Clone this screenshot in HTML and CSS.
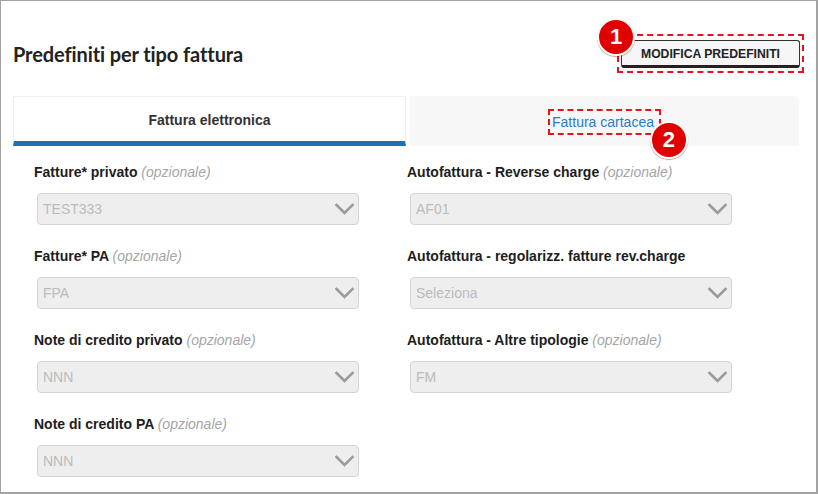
FILE: index.html
```html
<!DOCTYPE html>
<html lang="it">
<head>
<meta charset="utf-8">
<title>Predefiniti per tipo fattura</title>
<link rel="stylesheet" href="styles.css">
</head>
<body>
<div class="frame">
  <header class="head">
    <h1 class="title">Predefiniti per tipo fattura</h1>
    <div class="mark mark-btn">
      <button class="btn">MODIFICA PREDEFINITI</button>
      <span class="badge badge-1">1</span>
    </div>
  </header>

  <nav class="tabs">
    <div class="tab tab-active">Fattura elettronica</div>
    <div class="tab tab-other">
      <span class="mark mark-link">
        <a class="link">Fattura cartacea</a>
        <span class="badge badge-2">2</span>
      </span>
    </div>
  </nav>

  <section class="grid">
    <div class="field">
      <div class="label">Fatture* privato <em>(opzionale)</em></div>
      <div class="select"><span>TEST333</span><svg class="chev" viewBox="0 0 20 12"><path d="M2 2 L10 10 L18 2"/></svg></div>
    </div>
    <div class="field">
      <div class="label">Autofattura - Reverse charge <em>(opzionale)</em></div>
      <div class="select"><span>AF01</span><svg class="chev" viewBox="0 0 20 12"><path d="M2 2 L10 10 L18 2"/></svg></div>
    </div>
    <div class="field">
      <div class="label">Fatture* PA <em>(opzionale)</em></div>
      <div class="select"><span>FPA</span><svg class="chev" viewBox="0 0 20 12"><path d="M2 2 L10 10 L18 2"/></svg></div>
    </div>
    <div class="field">
      <div class="label">Autofattura - regolarizz. fatture rev.charge</div>
      <div class="select"><span>Seleziona</span><svg class="chev" viewBox="0 0 20 12"><path d="M2 2 L10 10 L18 2"/></svg></div>
    </div>
    <div class="field">
      <div class="label">Note di credito privato <em>(opzionale)</em></div>
      <div class="select"><span>NNN</span><svg class="chev" viewBox="0 0 20 12"><path d="M2 2 L10 10 L18 2"/></svg></div>
    </div>
    <div class="field">
      <div class="label">Autofattura - Altre tipologie <em>(opzionale)</em></div>
      <div class="select"><span>FM</span><svg class="chev" viewBox="0 0 20 12"><path d="M2 2 L10 10 L18 2"/></svg></div>
    </div>
    <div class="field">
      <div class="label">Note di credito PA <em>(opzionale)</em></div>
      <div class="select"><span>NNN</span><svg class="chev" viewBox="0 0 20 12"><path d="M2 2 L10 10 L18 2"/></svg></div>
    </div>
  </section>
</div>
</body>
</html>
```

FILE: styles.css
```css
* { box-sizing: border-box; }
html, body { margin: 0; padding: 0; }
body {
  width: 818px;
  height: 494px;
  overflow: hidden;
  background: #fff;
  font-family: "Liberation Sans", Arial, sans-serif;
  color: #222;
}
.frame {
  width: 818px;
  height: 494px;
  border: 1px solid #a3a3a3;
  border-right-width: 2px;
  border-bottom-width: 2px;
  padding: 33px 0 0 12px;
}
.head {
  display: flex;
  align-items: center;
  justify-content: space-between;
  width: 791px;
  height: 39px;
}
.title {
  margin: 0;
  font-family: Lato, "Liberation Sans", sans-serif;
  font-weight: 700;
  font-size: 20px;
  color: #222;
  letter-spacing: -0.1px;
}
.mark {
  position: relative;
  border: 2px dashed #e0161b;
}
.mark-btn {
  padding: 4px 2px 3px 2px;
  display: flex;
}
.btn {
  width: 179px;
  height: 28px;
  background: #f6f6f6;
  border: 1px solid #333;
  border-bottom: 3px solid #222;
  border-radius: 3px;
  font-family: "Liberation Sans", Arial, sans-serif;
  font-weight: 700;
  font-size: 12.2px;
  color: #222;
  padding: 1px 0 0 0;
}
.badge {
  position: absolute;
  width: 38px;
  height: 38px;
  border-radius: 50%;
  background: #e00000;
  border: 2px solid #fff;
  color: #fff;
  font-weight: 700;
  font-size: 22px;
  display: flex;
  align-items: center;
  justify-content: center;
  box-shadow: 0 1px 1px rgba(120,0,0,0.4);
}
.badge-1 { left: -22px; top: -18px; }
.badge-2 { right: -29px; top: 10px; }

.tabs {
  display: flex;
  gap: 4px;
  margin-top: 23px;
  width: 786px;
  height: 50px;
}
.tab {
  height: 50px;
  display: flex;
  align-items: center;
  justify-content: center;
  font-size: 14px;
}
.tab-active {
  width: 393px;
  background: #fff;
  border: 1px solid #f0f0f0;
  border-bottom: 5px solid #1a73ba;
  font-weight: 700;
  color: #333;
  padding-top: 1px;
}
.tab-other {
  width: 389px;
  background: #f7f7f7;
  border-top-right-radius: 5px;
  padding-top: 1px;
}
.mark-link {
  display: inline-block;
  padding: 3px 5px 3px 2px;
}
.link {
  color: #2a7cc4;
  font-size: 14px;
  line-height: 16px;
  display: block;
}

.grid {
  display: grid;
  grid-template-columns: 373px 373px;
  row-gap: 23px;
  margin-top: 18px;
  padding-left: 21px;
}
.field {
  display: flex;
  flex-direction: column;
}
.label {
  font-weight: 700;
  font-size: 14px;
  line-height: 16px;
  height: 16px;
  color: #1d1d1d;
}
.label em {
  font-weight: 400;
  font-style: italic;
  color: #a5a5a5;
}
.select {
  margin: 13px 0 0 3px;
  width: 322px;
  height: 32px;
  background: #eeeeee;
  border: 1px solid #d4d4d4;
  border-radius: 4px;
  display: flex;
  align-items: center;
  justify-content: space-between;
  padding: 0 3px 0 5px;
  font-size: 14px;
  color: #bbbbbb;
}
.chev {
  width: 21px;
  height: 12px;
  fill: none;
  stroke: #9a9a9a;
  stroke-width: 2.6;
  stroke-linecap: square;
}
```
